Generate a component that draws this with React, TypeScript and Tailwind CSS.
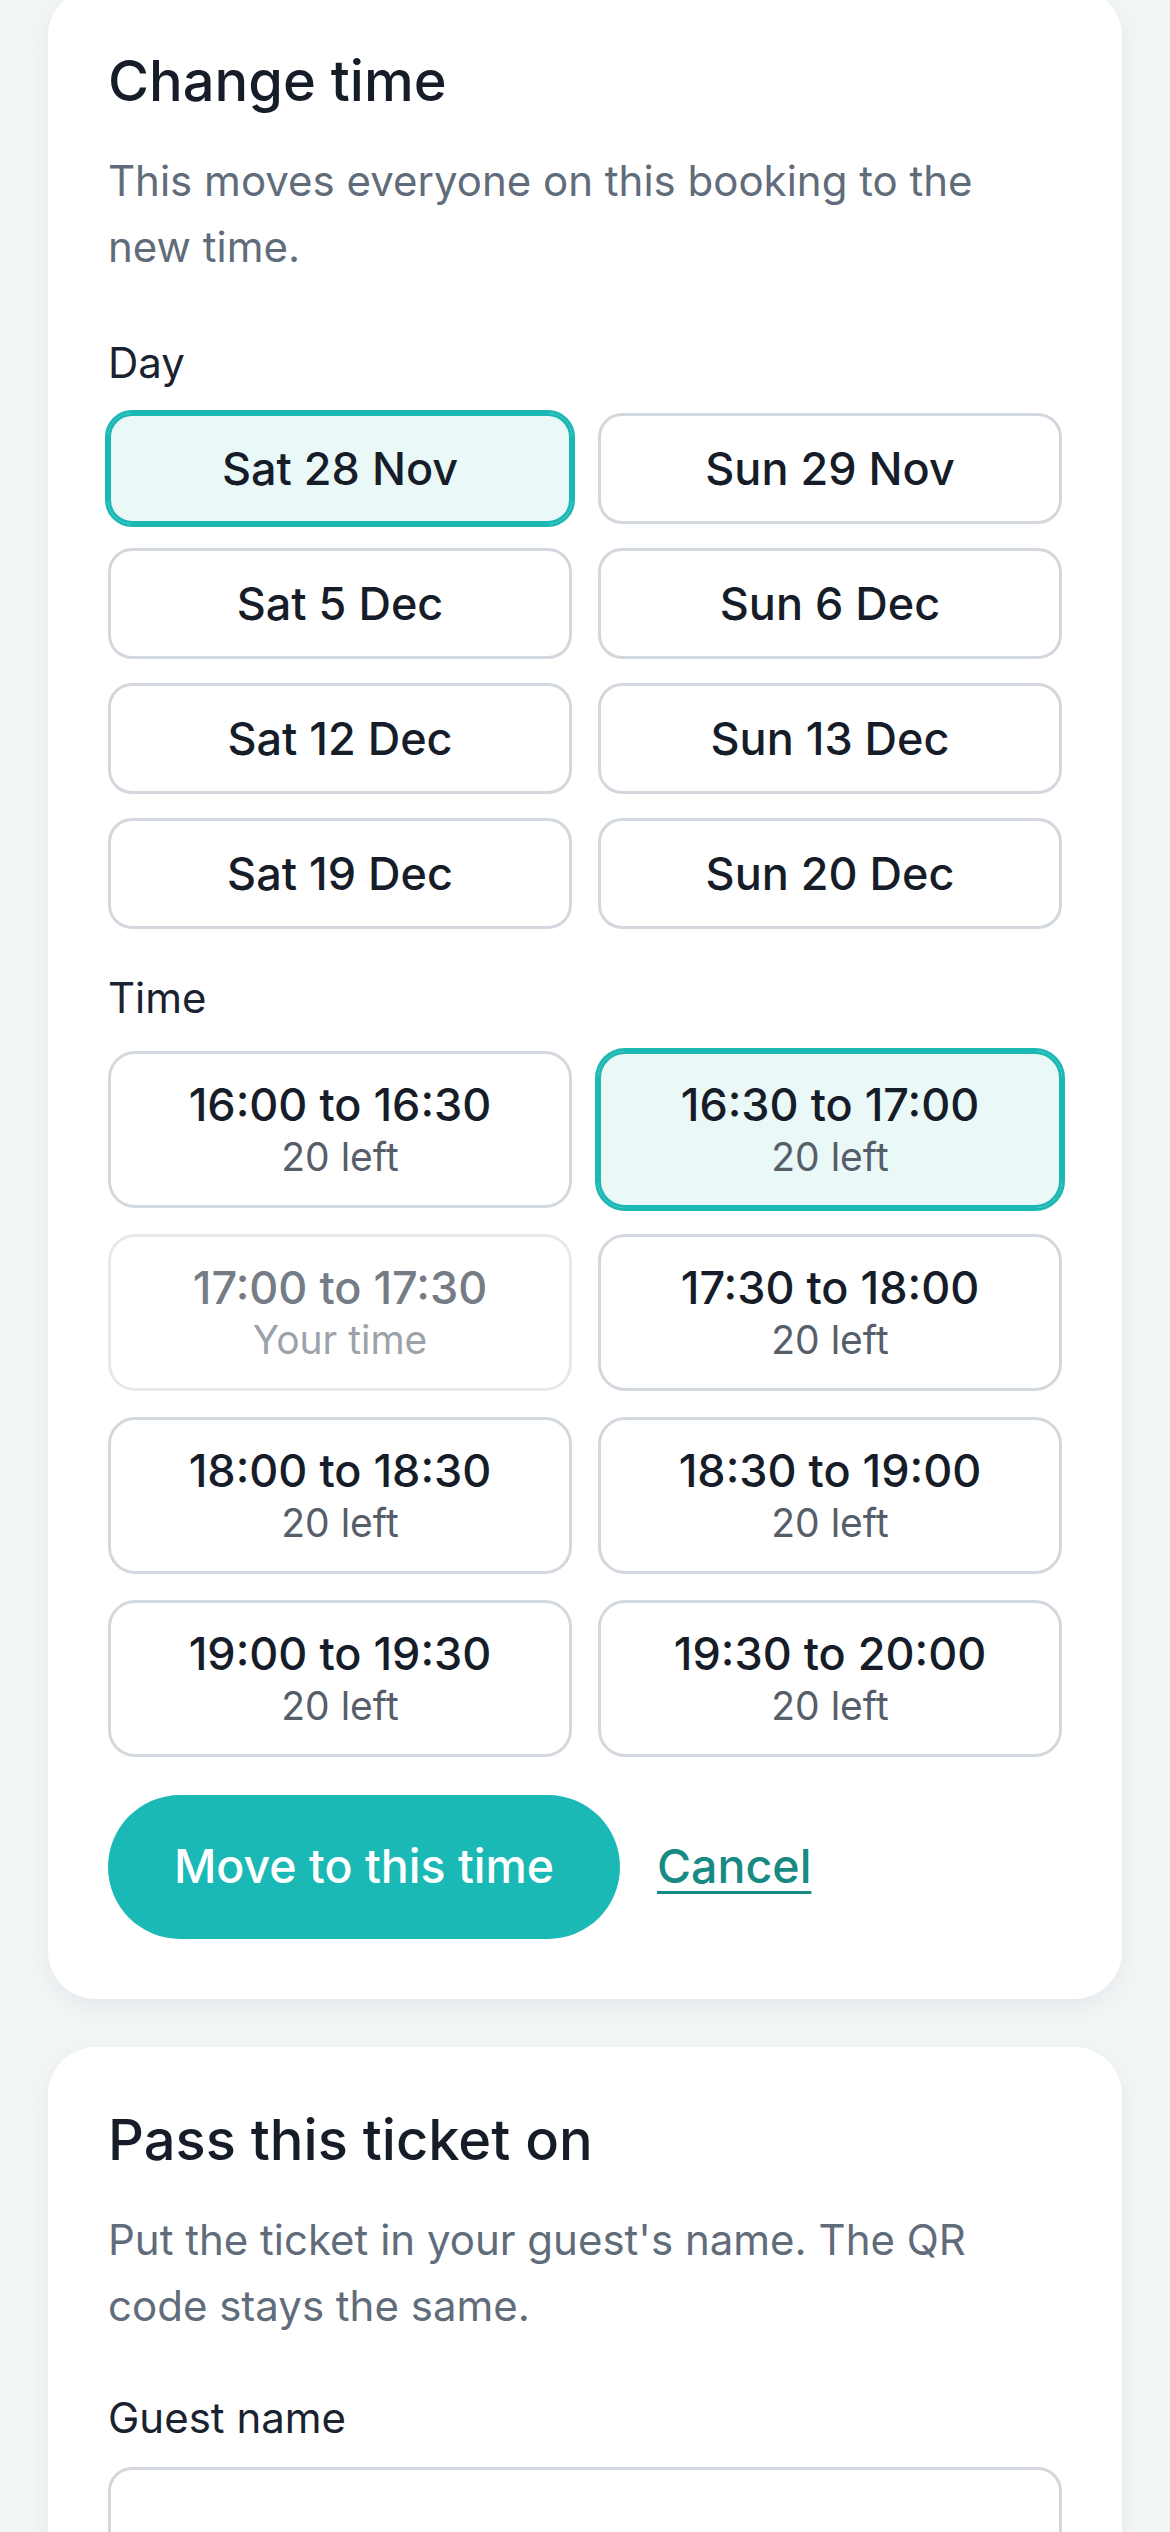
import React from 'react';

type Slot = { time: string; note: string; state?: 'selected' | 'current' };

const days = [
  'Sat 28 Nov',
  'Sun 29 Nov',
  'Sat 5 Dec',
  'Sun 6 Dec',
  'Sat 12 Dec',
  'Sun 13 Dec',
  'Sat 19 Dec',
  'Sun 20 Dec',
];

const slots: Slot[] = [
  { time: '16:00 to 16:30', note: '20 left' },
  { time: '16:30 to 17:00', note: '20 left', state: 'selected' },
  { time: '17:00 to 17:30', note: 'Your time', state: 'current' },
  { time: '17:30 to 18:00', note: '20 left' },
  { time: '18:00 to 18:30', note: '20 left' },
  { time: '18:30 to 19:00', note: '20 left' },
  { time: '19:00 to 19:30', note: '20 left' },
  { time: '19:30 to 20:00', note: '20 left' },
];

const App: React.FC = () => {
  const selectedDay = 'Sat 28 Nov';

  return (
    <div className="min-h-screen bg-[#f3f6f7] px-[48px] pb-[200px] font-['Inter','Noto_Sans',sans-serif] overflow-hidden">
      {/* Change time card */}
      <div className="mt-[-12px] rounded-[48px] bg-white px-[60px] pt-[60px] pb-[60px] shadow-[0_8px_28px_rgba(15,23,42,0.06)]">
        <h2 className="text-[56px] leading-[67px] font-medium text-[#161d29]">Change time</h2>
        <p className="mt-[33px] max-w-[900px] text-[42px] leading-[66px] text-[#616c7a]">
          This moves everyone on this booking to the new time.
        </p>

        <div className="mt-[53px] text-[42px] leading-[60px] text-[#1a2230]">Day</div>
        <div className="mt-[20px] grid grid-cols-2 gap-x-[26px] gap-y-[24px]">
          {days.map((d) => {
            const active = d === selectedDay;
            return (
              <button
                key={d}
                className={`flex h-[111px] items-center justify-center rounded-[24px] border-[3px] text-[45px] font-medium text-[#161d29] ${
                  active
                    ? 'border-[#1cb8b4] bg-[#eaf8f8] outline-[3px] outline-solid outline-[#1cb8b4]'
                    : 'border-[#d3d8de] bg-white'
                }`}
              >
                {d}
              </button>
            );
          })}
        </div>

        <div className="mt-[39px] text-[42px] leading-[60px] text-[#1a2230]">Time</div>
        <div className="mt-[23px] grid grid-cols-2 gap-[26px]">
          {slots.map((s) => {
            const selected = s.state === 'selected';
            const current = s.state === 'current';
            return (
              <button
                key={s.time}
                className={`flex h-[157px] flex-col items-center justify-center rounded-[27px] border-[3px] ${
                  selected
                    ? 'border-[#1cb8b4] bg-[#eaf8f8] outline-[3px] outline-solid outline-[#1cb8b4]'
                    : current
                    ? 'border-[#e6e8eb] bg-white'
                    : 'border-[#d3d8de] bg-white'
                }`}
              >
                <span
                  className={`text-[45px] leading-[54px] font-medium ${
                    current ? 'text-[#767c85]' : 'text-[#161d29]'
                  }`}
                >
                  {s.time}
                </span>
                <span className={`text-[39px] leading-[50px] ${current ? 'text-[#9ca2aa]' : 'text-[#565e6a]'}`}>
                  {s.note}
                </span>
              </button>
            );
          })}
        </div>

        <div className="mt-[38px] flex items-center">
          <button className="h-[144px] w-[512px] rounded-full bg-[#1bb9b5] text-[46.5px] font-medium text-white">
            Move to this time
          </button>
          <a href="#" className="ml-[37px] text-[46.5px] font-medium text-[#188a84] underline underline-offset-[8px] decoration-[3px]">
            Cancel
          </a>
        </div>
      </div>

      {/* Pass this ticket on card */}
      <div className="mt-[48px] rounded-[48px] bg-white px-[60px] pt-[60px] pb-[60px] shadow-[0_8px_28px_rgba(15,23,42,0.06)]">
        <h2 className="text-[56px] leading-[67px] font-medium text-[#161d29]">Pass this ticket on</h2>
        <p className="mt-[33px] max-w-[900px] text-[42px] leading-[66px] text-[#616c7a]">
          Put the ticket in your guest's name. The QR code stays the same.
        </p>
        <label className="mt-[49px] block text-[42px] leading-[60px] text-[#1a2230]">Guest name</label>
        <input
          type="text"
          className="mt-[19px] block h-[144px] w-full rounded-[24px] border-[3px] border-[#d3d8de] bg-white px-[40px] text-[45px] outline-none"
        />
      </div>
    </div>
  );
};

export default App;
